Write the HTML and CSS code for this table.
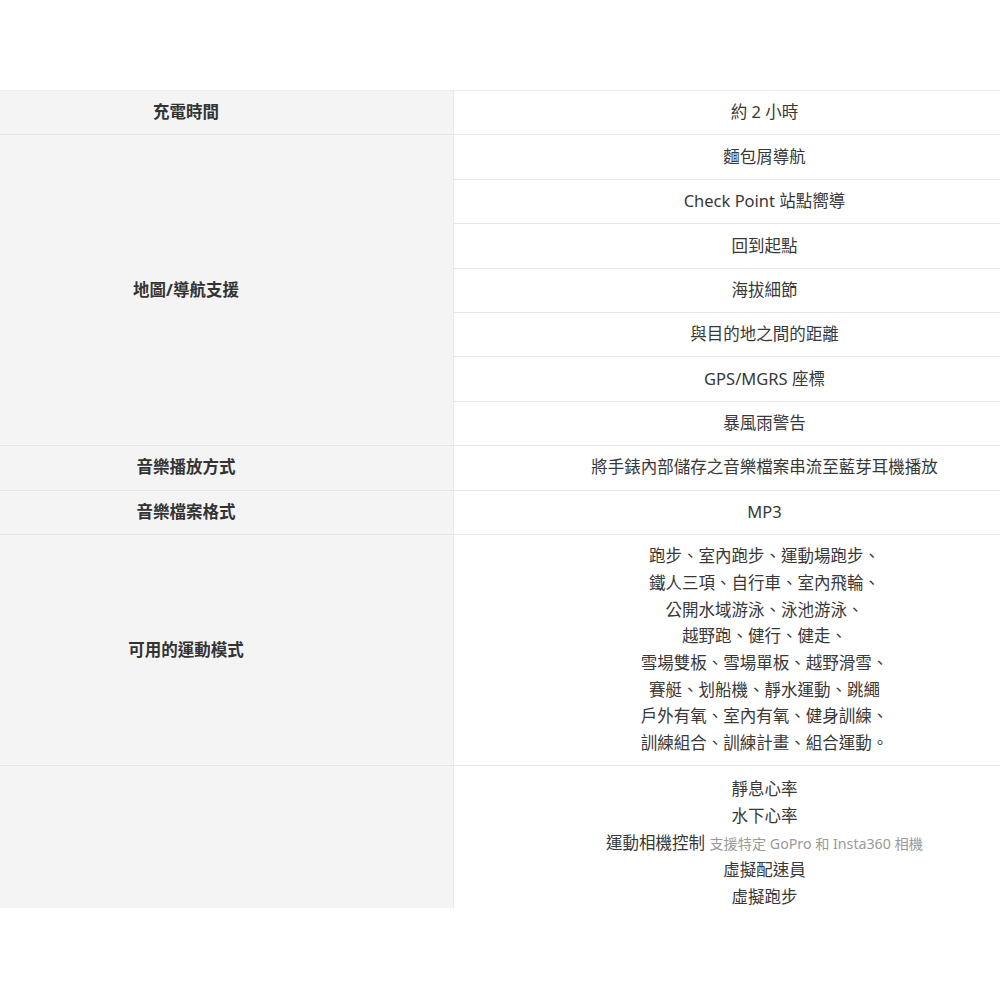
FILE: index.html
```html
<!DOCTYPE html>
<html lang="zh-Hant">
<head>
<meta charset="utf-8">
<title>規格</title>
<link rel="stylesheet" href="styles.css">
</head>
<body>
<div class="spec-wrap">
<table class="spec">
  <tbody>
    <tr>
      <th>充電時間</th>
      <td>約 2 小時</td>
    </tr>
    <tr>
      <th rowspan="7">地圖/導航支援</th>
      <td>麵包屑導航</td>
    </tr>
    <tr><td>Check Point 站點嚮導</td></tr>
    <tr><td>回到起點</td></tr>
    <tr><td>海拔細節</td></tr>
    <tr><td>與目的地之間的距離</td></tr>
    <tr><td>GPS/MGRS 座標</td></tr>
    <tr><td>暴風雨警告</td></tr>
    <tr>
      <th>音樂播放方式</th>
      <td>將手錶內部儲存之音樂檔案串流至藍芽耳機播放</td>
    </tr>
    <tr>
      <th>音樂檔案格式</th>
      <td>MP3</td>
    </tr>
    <tr>
      <th>可用的運動模式</th>
      <td>跑步、室內跑步、運動場跑步、<br>鐵人三項、自行車、室內飛輪、<br>公開水域游泳、泳池游泳、<br>越野跑、健行、健走、<br>雪場雙板、雪場單板、越野滑雪、<br>賽艇、划船機、靜水運動、跳繩<br>戶外有氧、室內有氧、健身訓練、<br>訓練組合、訓練計畫、組合運動。</td>
    </tr>
    <tr class="last">
      <th></th>
      <td>靜息心率<br>水下心率<br>運動相機控制 <span class="note">支援特定 GoPro 和 Insta360 相機</span><br>虛擬配速員<br>虛擬跑步</td>
    </tr>
  </tbody>
</table>
</div>
</body>
</html>
```

FILE: styles.css
```css
html, body {
  margin: 0;
  padding: 0;
  background: #fff;
}

body {
  padding-top: 90px;
  font-family: "Noto Sans", "Noto Sans CJK TC", sans-serif;
  color: #333;
}

.spec-wrap {
  height: 818px;
  overflow: hidden;
}

.spec {
  width: 1000px;
  border-collapse: collapse;
  border-top: 1px solid #efefef;
  table-layout: fixed;
}

.spec th,
.spec td {
  font-size: 16.5px;
  line-height: 26.7px;
  text-align: center;
  vertical-align: middle;
  border-bottom: 1px solid #e6e6e6;
}

.spec th {
  width: 352px;
  padding: 8.35px 91px 8.35px 10px;
  background: #f4f4f4;
  font-weight: 700;
  color: #333;
  border-right: 1px solid #e8e8e8;
}

.spec td {
  padding: 8.35px 10px 8.35px 85px;
  font-weight: 400;
  color: #383838;
}

.spec .last th,
.spec .last td {
  border-bottom: none;
  padding-top: 10px;
}

.note {
  font-size: 14.2px;
  color: #9a9a9a;
}
```
